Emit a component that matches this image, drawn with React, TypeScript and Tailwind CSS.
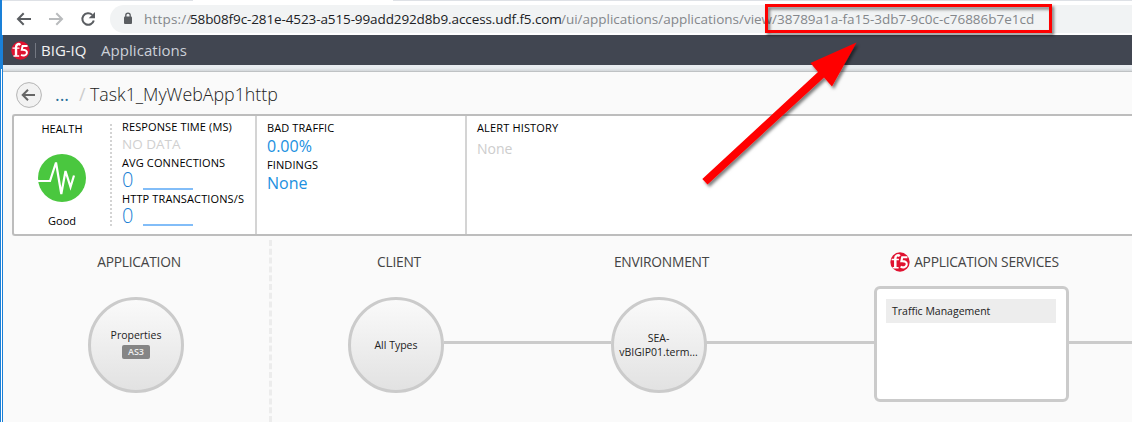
import React from "react";

function F5Logo({ size, className = "" }: { size: number; className?: string }) {
  return (
    <svg width={size} height={size} viewBox="0 0 20 20" className={`shrink-0 ${className}`}>
      <circle cx="10" cy="10" r="9.7" fill="#e01230" />
      <path d="M9.8 4.2C8 2.2 5.3 3.6 5.3 6.4V15.4" fill="none" stroke="#fff" strokeWidth="2.5" />
      <path d="M1.6 7.5H8.9M2.6 15.8H8.6" fill="none" stroke="#fff" strokeWidth="1.4" />
      <path d="M17.4 5.2H12.2L11.4 9.2C15 8.9 17.2 10.4 16.7 12.8C16.2 15.3 13 16 10.6 14.6" fill="none" stroke="#fff" strokeWidth="2.1" />
    </svg>
  );
}

function BrowserBar() {
  return (
    <div className="-ml-px flex h-[35px] flex-col bg-white">
      <div className="flex h-px justify-between bg-white">
        <div className="w-[191px] bg-[#dee1e6]" />
        <div className="w-[739px] bg-[#dee1e6]" />
      </div>
      <div className="mt-1 flex h-7 items-center pl-[13px]">
        <svg width="88" height="20" viewBox="0 0 88 20" fill="none" strokeWidth="2" className="shrink-0">
          <path d="M16 10H3M8.7 4.3L3 10L8.7 15.7" stroke="#5a5d61" />
          <path d="M34 10H47M41.3 4.3L47 10L41.3 15.7" stroke="#b9bbbd" />
          <path d="M77.3 5.9A5.8 5.8 0 1 0 78.8 11.5" stroke="#5a5d61" />
          <path d="M80 3V9.3H73.7Z" fill="#5a5d61" />
        </svg>
        <div className="ml-[7px] flex h-7 flex-1 items-center rounded-l-full bg-[#f1f3f4] pl-[12px]">
          <svg width="12" height="14" viewBox="0 0 12 14" className="shrink-0">
            <rect x="2" y="4.5" width="8" height="7.5" rx="1" fill="#5a5d61" />
            <path d="M3.8 5V3.3a2.2 2.2 0 0 1 4.4 0V5" stroke="#5a5d61" strokeWidth="1.3" fill="none" />
          </svg>
          <div className="flex whitespace-nowrap pl-[10px] text-[13.5px] leading-5 text-[#84878b]">
            <span className="w-[46px] tracking-[0.2px]">https://</span>
            <span className="w-[371px] tracking-[-0.11px] text-[#202124]">58b08f9c-281e-4523-a515-99add292d8b9.access.udf.f5.com</span>
            <span className="tracking-[-0.01px]">/ui/applications/applications/view/38789a1a-fa15-3db7-9c0c-c76886b7e1cd</span>
          </div>
        </div>
      </div>
    </div>
  );
}

function ProductBar() {
  return (
    <div className="flex h-[30px] items-center bg-[#414651] pl-2">
      <F5Logo size={19} />
      <div className="ml-[5px] h-[15px] w-px bg-[#747882]" />
      <span className="ml-[5px] w-[60px] text-[15px] text-[#f2f2f2]">BIG-IQ</span>
      <span className="text-[15px] tracking-[0.05px] text-[#ccd0d8]">Applications</span>
    </div>
  );
}

function Metric({ label }: { label: string }) {
  return (
    <div className="flex h-9 flex-col">
      <div className="h-[14px] whitespace-nowrap text-[11px] leading-[14px] tracking-[0.12px]">{label}</div>
      <div className="flex h-[22px] items-start">
        <span className="w-[21px] text-[20px] leading-5 font-light text-[#1a7fd4]">0</span>
        <div className="mt-[18px] h-[2px] w-[50px] bg-[#82bdf8]" />
      </div>
    </div>
  );
}

function Summary() {
  return (
    <div className="ml-[9px] flex h-[122px] shrink-0 rounded-l-[3px] border-2 border-r-0 border-[#bdbdbd] bg-white text-[11px] text-black">
      <div className="flex w-[96px] flex-col items-center pt-[5px]">
        <div className="h-[15px] leading-[15px]">HEALTH</div>
        <svg width="48" height="48" viewBox="0 0 48 48" className="mt-[18px]">
          <circle cx="24" cy="24" r="24" fill="#4ac73f" />
          <path d="M0 27H12L18 8.5L23.3 40L27.5 17L32.5 33L36 21.5" fill="none" stroke="#fff" strokeWidth="2.2" />
        </svg>
        <div className="mt-[11px] leading-[15px]">Good</div>
      </div>
      <div className="mt-2 h-[102px] border-l-2 border-dotted border-[#d3d3d3]" />
      <div className="flex w-[143px] flex-col pt-[4px] pl-[10px]">
        <div className="h-[14px] whitespace-nowrap leading-[14px] tracking-[0.12px]">RESPONSE TIME (MS)</div>
        <div className="h-[22px] text-[13.5px] leading-5 text-[#d0d0d0]">NO DATA</div>
        <Metric label="AVG CONNECTIONS" />
        <Metric label="HTTP TRANSACTIONS/S" />
      </div>
      <div className="w-[210px] border-l-2 border-[#d4d4d4] pt-[5px] pl-[10px]">
        <div className="leading-[14px] tracking-[0.1px]">BAD TRAFFIC</div>
        <div className="h-[23px] text-[16px] leading-[22px] text-[#2090e0]">0.00%</div>
        <div className="leading-[14px] tracking-[0.1px]">FINDINGS</div>
        <div className="text-[16px] leading-[22px] text-[#2090e0]">None</div>
      </div>
      <div className="flex-1 border-l-2 border-[#d4d4d4] pt-[5px] pl-[10px]">
        <div className="leading-[14px] tracking-[0.15px]">ALERT HISTORY</div>
        <div className="mt-1 text-[14px] leading-5 text-[#cdcdcd]">None</div>
      </div>
    </div>
  );
}

function Node({ children }: { children: React.ReactNode }) {
  return (
    <div className="flex size-24 shrink-0 flex-col items-center justify-center rounded-full border-[3px] border-[#cbcbcb] bg-linear-to-b from-[#fafafa] to-[#e2e2e2] text-center text-[10.5px] leading-[14px] text-[#222]">
      {children}
    </div>
  );
}

function Column({ title, className, children }: { title: React.ReactNode; className: string; children: React.ReactNode }) {
  return (
    <div className={`flex shrink-0 flex-col items-center pt-[16px] ${className}`}>
      <div className="flex h-5 items-center whitespace-nowrap pl-[6px] text-[13.8px] tracking-[-0.25px] text-[#444]">{title}</div>
      {children}
    </div>
  );
}

function Link({ className }: { className: string }) {
  return <div className={`mt-[105px] h-[3px] shrink-0 bg-[#cbcbcb] ${className}`} />;
}

function Diagram() {
  return (
    <div className="flex h-[186px] shrink-0 items-start overflow-hidden">
      <Column className="ml-[85px] w-24" title="APPLICATION">
        <div className="mt-[25px]">
          <Node>
            <span className="-mt-1">Properties</span>
            <span className="mt-[3px] h-[14px] w-7 rounded-[2px] bg-[#858585] text-[9px] leading-[14px] font-semibold text-[#eee]">AS3</span>
          </Node>
        </div>
      </Column>
      <svg width="3" height="186" className="ml-[85px] shrink-0">
        <path d="M1.5 4V186" stroke="#ececec" strokeWidth="3" strokeDasharray="6 2.8" />
      </svg>
      <Column className="ml-[76px] w-24" title="CLIENT">
        <div className="mt-[25px]">
          <Node>All Types</Node>
        </div>
      </Column>
      <Link className="w-[167px]" />
      <Column className="w-[95px]" title="ENVIRONMENT">
        <div className="mt-[25px]">
          <Node>
            <span>SEA-</span>
            <span>vBIGIP01.term...</span>
          </Node>
        </div>
      </Column>
      <Link className="w-[168px]" />
      <Column
        className="w-[195px]"
        title={
          <>
            <F5Logo size={20} className="mr-1" />
            APPLICATION SERVICES
          </>
        }
      >
        <div className="mt-[14px] h-[116px] w-[195px] rounded-[6px] border-[3px] border-[#cbcbcb] bg-white px-[9px] pt-[10px]">
          <div className="h-6 w-[170px] bg-[#ededed] pl-[6px] text-[10.5px] leading-6 text-[#222]">Traffic Management</div>
        </div>
      </Column>
      <Link className="w-[70px]" />
    </div>
  );
}

function Annotation() {
  return (
    <svg width="1132" height="422" className="pointer-events-none absolute inset-0">
      <defs>
        <filter id="shadow" x="-10%" y="-10%" width="125%" height="125%">
          <feDropShadow dx="2" dy="2.5" stdDeviation="1.5" floodColor="#000" floodOpacity="0.5" />
        </filter>
      </defs>
      <g filter="url(#shadow)">
        <rect x="766.5" y="5.5" width="284" height="26" fill="none" stroke="#f00" strokeWidth="3" />
        <path d="M856.5 42.5L810.5 63L818 72L702.3 179L707.5 184.5L824 77.5L832 86.5Z" fill="#f00" />
      </g>
    </svg>
  );
}

export default function App() {
  return (
    <div className="relative flex h-[422px] w-[1132px] overflow-hidden bg-[#fafafa] font-['Open_Sans','Noto_Sans',sans-serif]">
      <div className="flex w-[3px] shrink-0 flex-col bg-[#1a80d8]">
        <div className="mt-[69px] ml-px w-px flex-1 bg-white" />
      </div>
      <div className="flex w-[1129px] flex-col">
        <BrowserBar />
        <ProductBar />
        <div className="h-[7px] shrink-0 border-b border-[#bfc2c4] bg-linear-to-b from-[#e9edf1] from-50% to-[#d3d7da]" />
        <div className="flex h-[42px] shrink-0 items-center pb-[1px] pt-[5px] pl-[13px]">
          <svg width="26" height="26" viewBox="0 0 26 26" className="shrink-0">
            <circle cx="13" cy="13" r="12.4" fill="#f2f2f2" stroke="#b4b4b4" />
            <path d="M19 13H7M12 7.7L6.7 13L12 18.3" fill="none" stroke="#666" strokeWidth="2" />
          </svg>
          <div className="flex pb-[2px] pl-[13px] text-[17.8px]">
            <span className="w-[24px] text-[#286f9b]">...</span>
            <span className="w-[11px] text-[#ccc]">/</span>
            <span className="font-light text-[#222]">Task1_MyWebApp1http</span>
          </div>
        </div>
        <Summary />
        <Diagram />
      </div>
      <Annotation />
    </div>
  );
}
